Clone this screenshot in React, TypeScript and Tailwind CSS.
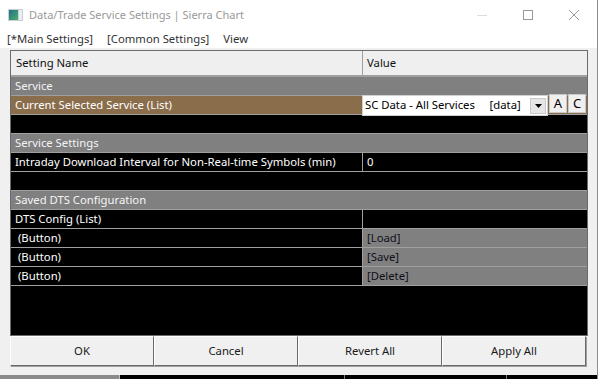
import React from "react";

const font = "font-['Segoe_UI','Noto_Sans',sans-serif]";

const Section = ({ label }: { label: string }) => (
  <div className="h-[19px] bg-[#808080] border-b border-[#a0a0a0] text-[#f4f4f4] pl-[4px] leading-[18px]">
    {label}
  </div>
);

const Row = ({
  name,
  value,
  valueBg,
  divider = true,
}: {
  name?: string;
  value?: string;
  valueBg?: string;
  divider?: boolean;
}) => (
  <div className="h-[19px] flex border-b border-[#a0a0a0] bg-black text-white leading-[18px]">
    <div className={`w-[352px] pl-[4px] whitespace-pre ${divider ? "border-r border-[#a0a0a0]" : ""}`}>{name}</div>
    <div className={`flex-1 pl-[4px] ${valueBg ?? ""}`}>{value}</div>
  </div>
);

const DlgButton = ({ label }: { label: string }) => (
  <button className="w-[144px] h-[30px] bg-[#f0f0f0] border border-t-white border-l-white border-r-[#696969] border-b-[#696969] shadow-[1px_1px_0_#a0a0a0] text-[#1a1a1a] text-[11.3px]">
    {label}
  </button>
);

export default function App() {
  return (
    <div className={`w-[599px] h-[379px] bg-white overflow-hidden text-[11.3px] ${font}`}>
      <div className="w-[598px] h-full border-r border-[#8c8c8c] flex flex-col">
        {/* title bar */}
        <div className="h-[30px] bg-white flex items-center">
          <svg width="15" height="12" viewBox="0 0 15 12" className="ml-[8px] shrink-0">
            <defs>
              <linearGradient id="g" x1="0" y1="0" x2="1" y2="1">
                <stop offset="0" stopColor="#1f6f8c" />
                <stop offset="1" stopColor="#4fae6a" />
              </linearGradient>
            </defs>
            <rect x="0" y="0" width="15" height="12" fill="#c9ced3" />
            <rect x="1" y="1" width="9" height="10" fill="url(#g)" />
            <rect x="11" y="1" width="3" height="10" fill="#e8eef2" />
          </svg>
          <span className="ml-[6px] text-[#999999] text-[11px]">Data/Trade Service Settings | Sierra Chart</span>
          <div className="ml-auto flex h-full">
            <div className="w-[46px] flex items-center justify-center">
              <div className="w-[10px] h-px bg-[#dcdcdc]" />
            </div>
            <div className="w-[46px] flex items-center justify-center">
              <div className="w-[10px] h-[10px] border border-[#999999]" />
            </div>
            <div className="w-[46px] flex items-center justify-center">
              <svg width="10" height="10" viewBox="0 0 10 10">
                <path d="M0 0L10 10M10 0L0 10" stroke="#999999" strokeWidth="1" />
              </svg>
            </div>
          </div>
        </div>
        {/* menu */}
        <div className="h-[18px] bg-white flex items-center gap-[14px] pl-[7px] text-[#333333] leading-none">
          <span>[*Main Settings]</span>
          <span>[Common Settings]</span>
          <span>View</span>
        </div>
        {/* body */}
        <div className="flex-1 bg-[#f0f0f0] pt-[2px] pl-[10px] pr-[10px] flex flex-col">
          <div className="relative w-[578px] h-[286px] border border-[#6b6b6b] bg-black flex flex-col">
            <div className="h-[26px] flex bg-[#efefef] border-b-2 border-[#a0a0a0] text-[#111] leading-[24px]">
              <div className="w-[352px] pl-[5px] border-r border-[#a0a0a0]">Setting Name</div>
              <div className="flex-1 pl-[4px]">Value</div>
            </div>
            <Section label="Service" />
            <div className="h-[19px] flex border-b border-[#a0a0a0] leading-[18px]">
              <div className="w-[352px] pl-[4px] bg-[#8a6d4b] text-white">Current Selected Service (List)</div>
              <div className="flex-1 bg-[#8a6d4b]" />
            </div>
            <Row divider={false} />
            <Section label="Service Settings" />
            <Row name="Intraday Download Interval for Non-Real-time Symbols (min)" value="0" />
            <Row divider={false} />
            <Section label="Saved DTS Configuration" />
            <Row name="DTS Config (List)" />
            <Row name=" (Button)" value="[Load]" valueBg="bg-[#808080] text-[#101018]" />
            <Row name=" (Button)" value="[Save]" valueBg="bg-[#808080] text-[#101018]" />
            <Row name=" (Button)" value="[Delete]" valueBg="bg-[#808080] text-[#101018]" />
            <div className="flex-1 bg-black" />

            {/* dropdown overlay */}
            <div className="absolute left-[351px] top-[44px] w-[186px] h-[21px] bg-white border border-[#d0d0d0] flex items-center text-black">
              <span className="pl-[2px] whitespace-pre">SC Data - All Services     [data]</span>
              <div className="ml-auto mr-[1px] w-[16px] h-[16px] bg-[#e6e6e6] border border-[#c8c8c8] flex items-center justify-center">
                <svg width="7" height="4" viewBox="0 0 7 4">
                  <path d="M0 0H7L3.5 4Z" fill="#000" />
                </svg>
              </div>
            </div>
            <div className="absolute left-[538px] top-[43px] flex gap-[1px]">
              <div className="w-[18px] h-[19px] bg-[#f0f0f0] border border-[#c8c8c8] flex items-center justify-center text-[13px] text-black">A</div>
              <div className="w-[18px] h-[19px] bg-[#f0f0f0] border border-[#c8c8c8] flex items-center justify-center text-[13px] text-black">C</div>
            </div>
          </div>
          <div className="flex">
            <DlgButton label="OK" />
            <DlgButton label="Cancel" />
            <DlgButton label="Revert All" />
            <DlgButton label="Apply All" />
          </div>
          <div className="flex-1" />
        </div>
        {/* bottom strip */}
        <div className="h-[4px] flex">
          <div className="w-[120px] bg-[#8a8a8a] border-r border-[#c0c0c0]" />
          <div className="w-[225px] bg-black border-r border-[#808080]" />
          <div className="w-[162px] bg-black border-r border-[#808080]" />
          <div className="flex-1 bg-black" />
        </div>
      </div>
    </div>
  );
}
